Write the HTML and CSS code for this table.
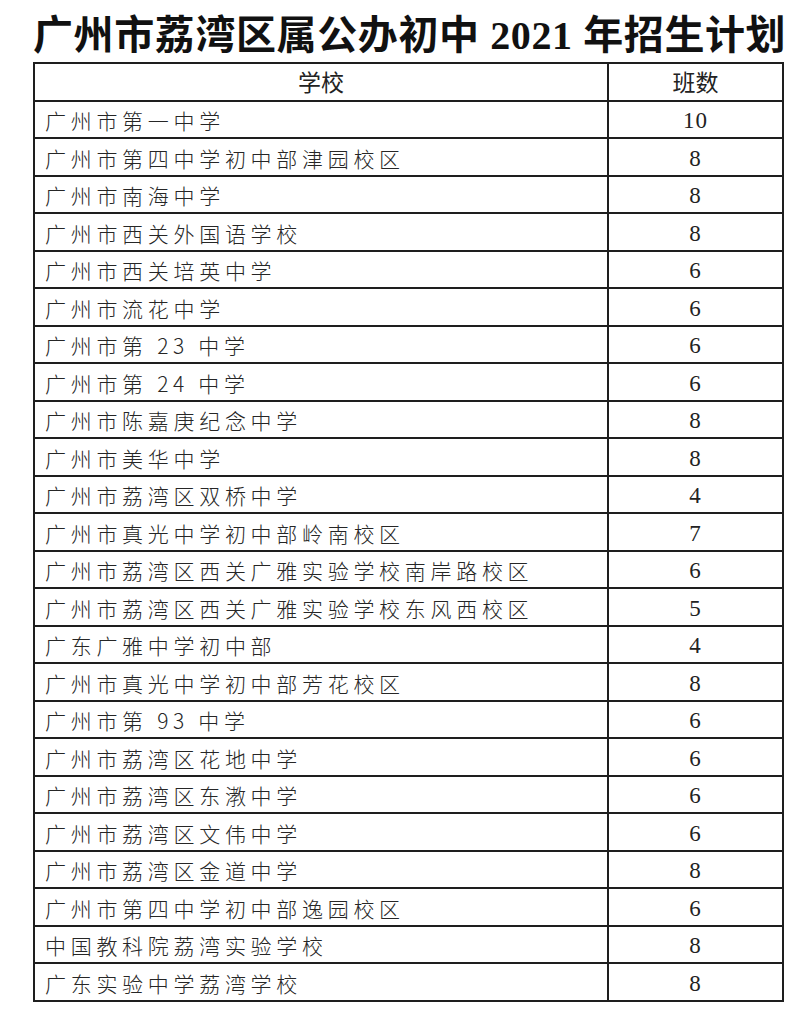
FILE: index.html
```html
<!DOCTYPE html>
<html lang="zh-CN">
<head>
<meta charset="utf-8">
<title>广州市荔湾区属公办初中 2021 年招生计划</title>
<link rel="stylesheet" href="styles.css">
</head>
<body>
<div class="page">
  <h1 class="title">广州市荔湾区属公办初中 2021 年招生计划</h1>
  <table class="plan">
    <colgroup>
      <col class="col-school">
      <col class="col-count">
    </colgroup>
    <thead>
      <tr><th class="h-school">学校</th><th class="h-count">班数</th></tr>
    </thead>
    <tbody>
      <tr><td class="school">广州市第一中学</td><td class="count">10</td></tr>
      <tr><td class="school">广州市第四中学初中部津园校区</td><td class="count">8</td></tr>
      <tr><td class="school">广州市南海中学</td><td class="count">8</td></tr>
      <tr><td class="school">广州市西关外国语学校</td><td class="count">8</td></tr>
      <tr><td class="school">广州市西关培英中学</td><td class="count">6</td></tr>
      <tr><td class="school">广州市流花中学</td><td class="count">6</td></tr>
      <tr><td class="school">广州市第 23 中学</td><td class="count">6</td></tr>
      <tr><td class="school">广州市第 24 中学</td><td class="count">6</td></tr>
      <tr><td class="school">广州市陈嘉庚纪念中学</td><td class="count">8</td></tr>
      <tr><td class="school">广州市美华中学</td><td class="count">8</td></tr>
      <tr><td class="school">广州市荔湾区双桥中学</td><td class="count">4</td></tr>
      <tr><td class="school">广州市真光中学初中部岭南校区</td><td class="count">7</td></tr>
      <tr><td class="school">广州市荔湾区西关广雅实验学校南岸路校区</td><td class="count">6</td></tr>
      <tr><td class="school">广州市荔湾区西关广雅实验学校东风西校区</td><td class="count">5</td></tr>
      <tr><td class="school">广东广雅中学初中部</td><td class="count">4</td></tr>
      <tr><td class="school">广州市真光中学初中部芳花校区</td><td class="count">8</td></tr>
      <tr><td class="school">广州市第 93 中学</td><td class="count">6</td></tr>
      <tr><td class="school">广州市荔湾区花地中学</td><td class="count">6</td></tr>
      <tr><td class="school">广州市荔湾区东漖中学</td><td class="count">6</td></tr>
      <tr><td class="school">广州市荔湾区文伟中学</td><td class="count">6</td></tr>
      <tr><td class="school">广州市荔湾区金道中学</td><td class="count">8</td></tr>
      <tr><td class="school">广州市第四中学初中部逸园校区</td><td class="count">6</td></tr>
      <tr><td class="school">中国教科院荔湾实验学校</td><td class="count">8</td></tr>
      <tr><td class="school">广东实验中学荔湾学校</td><td class="count">8</td></tr>
    </tbody>
  </table>
</div>
</body>
</html>
```

FILE: styles.css
```css
html, body {
  margin: 0;
  padding: 0;
  background: #ffffff;
}

.page {
  width: 749px;
  margin-left: 33px;
}

.title {
  margin: 0;
  padding: 12px 0 2px;
  line-height: 48px;
  font-family: "Liberation Serif", "Noto Sans CJK SC", serif;
  font-size: 40px;
  font-weight: 700;
  letter-spacing: 0.6px;
  color: #111111;
  text-align: center;
  white-space: nowrap;
}

.plan {
  width: 749px;
  border-collapse: collapse;
  table-layout: fixed;
  color: #222222;
}

.col-school {
  width: 574px;
}

.col-count {
  width: 175px;
}

.plan th,
.plan td {
  border: 2px solid #1e1e1e;
  height: 37.5px;
  padding: 0;
  box-sizing: border-box;
  vertical-align: middle;
}

.plan th {
  font-family: "Noto Sans CJK SC", sans-serif;
  font-size: 23px;
  font-weight: 400;
  text-align: center;
  line-height: 1;
}

.plan td.school {
  padding-left: 10px;
  padding-top: 3px;
  font-family: "Noto Sans CJK SC", sans-serif;
  font-size: 21px;
  font-weight: 300;
  letter-spacing: 4.7px;
  line-height: 1;
  white-space: nowrap;
  color: #262626;
}

.plan td.count {
  text-align: center;
  padding-top: 3px;
  font-family: "Liberation Serif", serif;
  font-size: 23px;
  line-height: 1;
  letter-spacing: 1px;
  color: #222222;
}
```
